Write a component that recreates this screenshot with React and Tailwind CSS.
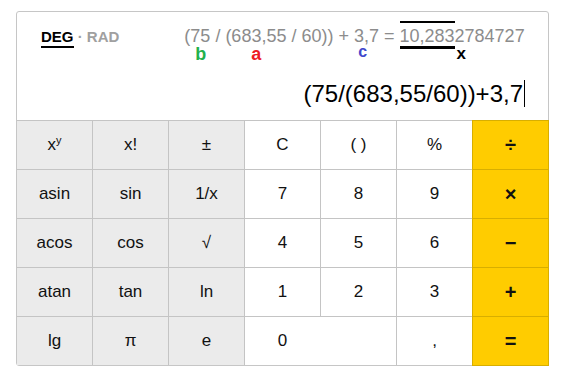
import React from 'react'

const rows = [
    [
        { label: 'xy', kind: 'fn' },
        { label: 'x!', kind: 'fn' },
        { label: '±', kind: 'fn' },
        { label: 'C', kind: 'num' },
        { label: '( )', kind: 'num' },
        { label: '%', kind: 'num' },
        { label: '÷', kind: 'op' },
    ],
    [
        { label: 'asin', kind: 'fn' },
        { label: 'sin', kind: 'fn' },
        { label: '1/x', kind: 'fn' },
        { label: '7', kind: 'num' },
        { label: '8', kind: 'num' },
        { label: '9', kind: 'num' },
        { label: '×', kind: 'op' },
    ],
    [
        { label: 'acos', kind: 'fn' },
        { label: 'cos', kind: 'fn' },
        { label: '√', kind: 'fn' },
        { label: '4', kind: 'num' },
        { label: '5', kind: 'num' },
        { label: '6', kind: 'num' },
        { label: '−', kind: 'op' },
    ],
    [
        { label: 'atan', kind: 'fn' },
        { label: 'tan', kind: 'fn' },
        { label: 'ln', kind: 'fn' },
        { label: '1', kind: 'num' },
        { label: '2', kind: 'num' },
        { label: '3', kind: 'num' },
        { label: '+', kind: 'op' },
    ],
    [
        { label: 'lg', kind: 'fn' },
        { label: 'π', kind: 'fn' },
        { label: 'e', kind: 'fn' },
        { label: '0', kind: 'zero' },
        { label: ',', kind: 'num' },
        { label: '=', kind: 'op' },
    ],
]

const Key = ({ k }) => {
    if (k.kind === 'zero') {
        return (
            <div className="col-span-2 flex items-center bg-white text-[17px] text-[#111]">
                <span className="w-[75px] text-center">0</span>
            </div>
        )
    }
    const tone =
        k.kind === 'fn'
            ? 'bg-[#ebebeb] text-[17px]'
            : k.kind === 'op'
            ? 'relative z-10 bg-[#ffcc00] shadow-[0_0_0_1px_#d8ae00] text-[20px] font-bold'
            : 'bg-white text-[17px]'
    return (
        <div className={`flex items-center justify-center text-[#111] ${tone}`}>
            {k.label === 'xy' ? (
                <span>
                    x<sup className="-top-[0.6em] text-[11px]">y</sup>
                </span>
            ) : (
                k.label
            )}
        </div>
    )
}

const App = () => {
    return (
        <div className="min-h-screen bg-white pt-[11px] pl-4 font-['Liberation_Sans',Arial,sans-serif]">
            <div className="w-[533px] rounded-[3px] border border-[#c6c6c6] bg-white">
                {/* Display */}
                <div className="h-[109px] border-b border-[#c4c4c4] pl-6 pr-[23px] pt-4">
                    <div className="flex items-start">
                        <div className="flex text-[15px] font-bold leading-[18px]">
                            <span className="border-b-2 border-black text-black">DEG</span>
                            <span className="text-[#a0a0a0]">&nbsp;·&nbsp;</span>
                            <span className="text-[#a0a0a0]">RAD</span>
                        </div>
                        <div className="relative ml-[65px] -mt-px whitespace-pre text-[18px] leading-[18px] text-[#8c8c8c]">
                            {'(75 / (683,55 / 60)) + 3,7 = '}
                            <span className="relative">
                                10,283
                                <span className="absolute left-0 right-0 -top-[5px] h-[2px] bg-black"></span>
                                <span className="absolute left-0 right-0 top-[20px] h-[3px] bg-black"></span>
                                <span className="absolute left-full top-[19px] ml-[2px] text-[17px] font-bold leading-none text-black">
                                    x
                                </span>
                            </span>
                            2784727
                            <span className="absolute left-[11px] top-[18px] text-[18px] font-bold leading-none text-[#22b14c]">
                                b
                            </span>
                            <span className="absolute left-[67px] top-[18px] text-[18px] font-bold leading-none text-[#ed1c24]">
                                a
                            </span>
                            <span className="absolute left-[174px] top-[17px] text-[16px] font-bold leading-none text-[#3f48cc]">
                                c
                            </span>
                        </div>
                    </div>
                    <div className="mt-[32px] flex items-center justify-end">
                        <span className="text-[24px] leading-[27px] text-black">(75/(683,55/60))+3,7</span>
                        <span className="ml-px h-[27px] w-px bg-black"></span>
                    </div>
                </div>

                {/* Keypad */}
                <div className="grid grid-cols-7 auto-rows-[48px] gap-px bg-[#c4c4c4]">
                    {rows.flat().map((k, i) => (
                        <Key key={i} k={k} />
                    ))}
                </div>
            </div>
        </div>
    )
}

export default App
